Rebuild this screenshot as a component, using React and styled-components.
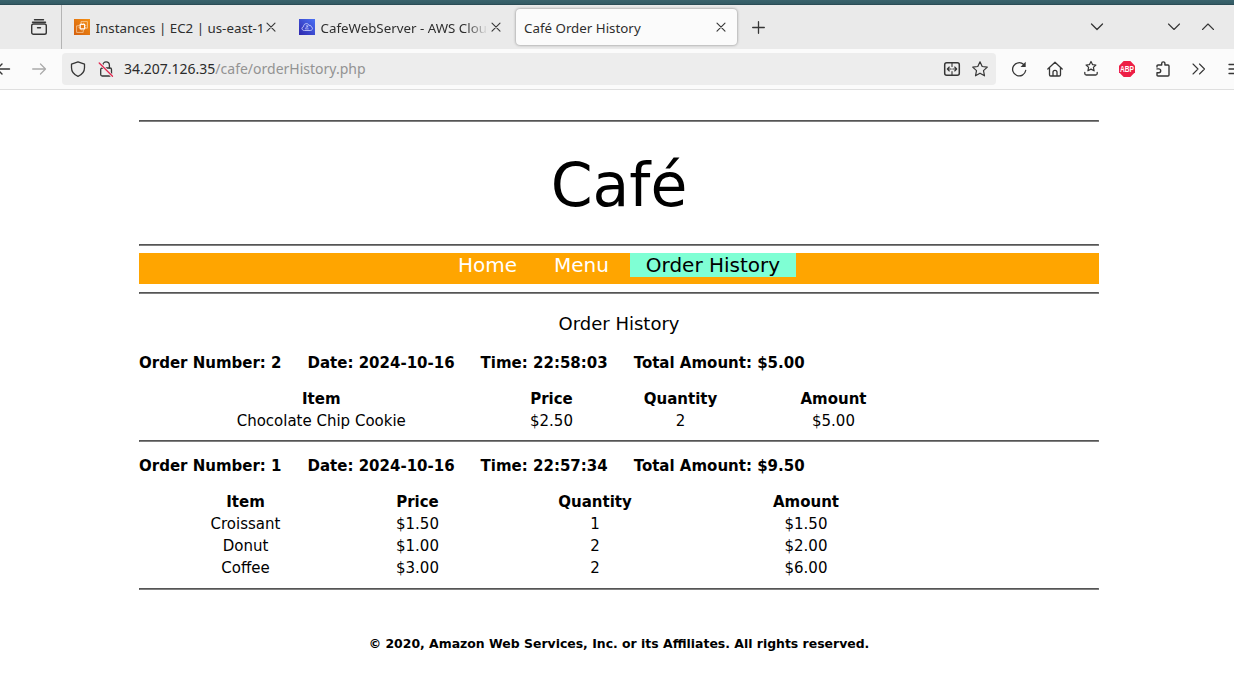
import React from "react";
import styled, { createGlobalStyle } from "styled-components";

const GlobalStyle = createGlobalStyle`
  *, *::before, *::after { box-sizing: border-box; }
  body {
    margin: 0;
    background: #fff;
    overflow: hidden;
  }
`;

const Window = styled.div`
  width: 1234px;
  height: 683px;
  overflow: hidden;
  display: flex;
  flex-direction: column;
  color: #2e2e2e;
  font-family: "Noto Sans", sans-serif;
`;

const DesktopEdge = styled.div`
  flex: none;
  height: 5px;
  background: linear-gradient(#3a636c 0, #345b65 70%, #26454e 100%);
`;

const TabStrip = styled.div`
  flex: none;
  height: 44px;
  display: flex;
  background: #eaeaea;
`;

const FirefoxView = styled.div`
  width: 62px;
  height: 44px;
  padding: 14px 0 0 31px;
  border-right: 1px solid #b4b4b4;
`;

const Tab = styled.div`
  width: ${(p) => p.$width}px;
  height: 36px;
  margin: 4px 0 0 ${(p) => p.$gap || 0}px;
  padding-left: 8px;
  display: flex;
  align-items: center;
  border-radius: 4px;
  font-size: 13.33px;
  ${(p) => p.$active && "background: #fbfbfb; box-shadow: 0 0 3px rgba(0,0,0,.45);"}
`;

const TabTitle = styled.span`
  width: ${(p) => p.$width}px;
  margin-left: ${(p) => p.$indent || 0}px;
  line-height: 20px;
  padding-top: 2px;
  white-space: nowrap;
  overflow: hidden;
  ${(p) => p.$fade && "mask-image: linear-gradient(90deg, #000 calc(100% - 22px), transparent);"}
`;

const CloseButton = styled.span`
  padding-top: 1px;
`;

const TabTools = styled.div`
  display: flex;
  padding-top: 14px;
  margin-left: ${(p) => p.$gap}px;
  gap: ${(p) => p.$spacing || 0}px;
`;

const Toolbar = styled.div`
  flex: none;
  height: 41px;
  display: flex;
  align-items: center;
  background: #fbfbfb;
  border-bottom: 1px solid #dfdfdf;
`;

const History = styled.div`
  flex: none;
  width: 62px;
  display: flex;
  gap: 20px;
  svg:first-child { margin-left: -5px; }
`;

const AddressBar = styled.div`
  flex: none;
  width: 934px;
  height: 32px;
  padding: 0 8px;
  display: flex;
  align-items: center;
  gap: 12px;
  border-radius: 4px;
  background: #ededed;
`;

const Address = styled.span`
  flex: 1;
  margin-left: -2px;
  font-size: 14px;
  line-height: 20px;
  color: #939393;
  b { font-weight: 400; color: #2b2b2b; }
`;

const Actions = styled.div`
  flex: none;
  display: flex;
  gap: 20px;
  margin-left: 15px;
`;

const Glyph = styled.svg`
  display: block;
  flex: none;
  overflow: visible;
  fill: none;
  stroke: ${(p) => p.$tone || "#363636"};
  stroke-width: ${(p) => p.$weight || 1.3};
  stroke-linecap: round;
  stroke-linejoin: round;
`;

const Icon = ({ children, size = 16, tone, weight }) => (
  <Glyph width={size} height={size} viewBox="0 0 16 16" $tone={tone} $weight={weight}>
    {children}
  </Glyph>
);

const CloseIcon = () => (
  <CloseButton>
    <Icon weight={1.1}><path d="M4 3.200l8 8M12 3.200l-8 8" /></Icon>
  </CloseButton>
);

const Page = styled.main`
  width: 960px;
  margin: 30px 0 0 139px;
  display: flex;
  flex-direction: column;
  color: #000;
  font-family: "DejaVu Sans", sans-serif;
  font-size: 15px;
`;

const Rule = styled.hr`
  width: 100%;
  height: 2px;
  margin: 0;
  border: 1px solid;
  border-color: #555 #808080 #808080 #555;
`;

const Title = styled.h1`
  height: 122px;
  margin: 0;
  padding-top: 2px;
  text-align: center;
  font-weight: 400;
  font-size: 60px;
  line-height: 122px;
`;

const Nav = styled.nav`
  height: 31px;
  margin: 7px 0 8px;
  padding-left: 303px;
  display: flex;
  align-items: flex-start;
  background: #ffa500;
  font-size: 20px;
`;

const NavLink = styled.a`
  width: ${(p) => p.$width}px;
  height: 24px;
  margin-right: 6px;
  text-align: center;
  line-height: 25px;
  color: ${(p) => (p.$current ? "#000" : "#fff")};
  background: ${(p) => (p.$current ? "#7fffd4" : "transparent")};
`;

const Heading = styled.h2`
  margin: 0;
  height: 58px;
  padding-top: 17px;
  text-align: center;
  font-weight: 400;
  font-size: 18px;
  line-height: 26px;
`;

const Summary = styled.div`
  height: 22px;
  display: flex;
  gap: 26px;
  font-weight: 700;
  line-height: 22px;
  white-space: nowrap;
`;

const Items = styled.div`
  display: grid;
  grid-template-columns: ${(p) => p.$columns};
  grid-auto-rows: 22px;
  margin: 14px 0 ${(p) => p.$after}px;
  text-align: center;
  line-height: 22px;
`;

const Head = styled.b`
  font-weight: 700;
`;

const Footer = styled.footer`
  margin-top: 44px;
  text-align: center;
  font-weight: 700;
  font-size: 12.45px;
  line-height: 20px;
`;

const ORDERS = [
  {
    number: 2, time: "22:58:03", total: "$5.00", after: 8, before: 0,
    columns: "364.5px 96px 162px 144px",
    items: [["Chocolate Chip Cookie", "$2.50", "2", "$5.00"]],
  },
  {
    number: 1, time: "22:57:34", total: "$9.50", after: 9, before: 13,
    columns: "213px 131px 224px 198px",
    items: [
      ["Croissant", "$1.50", "1", "$1.50"],
      ["Donut", "$1.00", "2", "$2.00"],
      ["Coffee", "$3.00", "2", "$6.00"],
    ],
  },
];

const OrderBlock = styled.section`
  padding-top: ${(p) => p.$before}px;
`;

const Order = ({ order }) => (
  <OrderBlock $before={order.before}>
    <Summary>
      <span>Order Number: {order.number}</span>
      <span>Date: 2024-10-16</span>
      <span>Time: {order.time}</span>
      <span>Total Amount: {order.total}</span>
    </Summary>
    <Items $columns={order.columns} $after={order.after}>
      {["Item", "Price", "Quantity", "Amount"].map((h) => <Head key={h}>{h}</Head>)}
      {order.items.flat().map((cell, i) => <span key={i}>{cell}</span>)}
    </Items>
    <Rule />
  </OrderBlock>
);

const Ec2Logo = () => (
  <Glyph width="16" height="16" viewBox="0 0 16 16" $tone="#fbd9b0" $weight={0.7}>
    <defs>
      <linearGradient id="ec2" x1="0" y1="1" x2="1" y2="0">
        <stop offset="0" stopColor="#d4600f" /><stop offset="1" stopColor="#f59012" />
      </linearGradient>
    </defs>
    <rect width="16" height="16" fill="url(#ec2)" stroke="none" />
    <path d="M4.500 6.800H2.600v6.600h6.600v-2M7 4.300V2.600h6.400v6.600h-1.900" />
    <rect x="6.200" y="5.400" width="4.400" height="4.400" stroke="#fff" strokeWidth="1.200" />
    <path d="M7.400 4.200v1M9.400 4.200v1M7.400 10v1M9.400 10v1M4.900 6.600h1M4.900 8.600h1M10.900 6.600h1M10.900 8.600h1" />
  </Glyph>
);

const CloudLogo = () => (
  <Glyph width="16" height="16" viewBox="0 0 16 16" $tone="#d5daff" $weight={0.8}>
    <defs>
      <linearGradient id="cloud" x1="0" y1="1" x2="1" y2="0">
        <stop offset="0" stopColor="#2e27ad" /><stop offset="1" stopColor="#4b72f5" />
      </linearGradient>
    </defs>
    <rect width="16" height="16" fill="url(#cloud)" stroke="none" />
    <path d="M5 11.500c-2.600 0-2.800-3.400-.4-3.800C4.400 4.200 9 3.500 10.100 6.500c1.300-.7 2.100.2 2.100 1.300 2 .5 1.600 3.700-.6 3.700z" />
    <path strokeWidth=".7" d="M6.500 9.300l2-2.300M7.300 6.800h1.400v1.400M6.700 9.900h2.600" />
  </Glyph>
);

export default function App() {
  return (
    <>
      <GlobalStyle />
      <Window>
        <DesktopEdge />
        <TabStrip>
          <FirefoxView>
            <Icon weight={1.4}>
              <path d="M3.500.8h9M1.500 3.200h13" />
              <rect x=".7" y="5" width="14.600" height="10.300" rx="1.800" />
              <path d="M6.500 8.800h3" />
            </Icon>
          </FirefoxView>
          <Tab $width={221} $gap={4}>
            <Ec2Logo />
            <TabTitle $indent={5.5} $width={167.5}>Instances | EC2 | us-east-1</TabTitle>
            <CloseIcon />
          </Tab>
          <Tab $width={221} $gap={4}>
            <CloudLogo />
            <TabTitle $indent={5.5} $width={167.5} $fade>CafeWebServer - AWS Cloud</TabTitle>
            <CloseIcon />
          </Tab>
          <Tab $width={221} $gap={4} $active>
            <TabTitle $width={189}>Café Order History</TabTitle>
            <CloseIcon />
          </Tab>
          <TabTools $gap={13}>
            <Icon weight={1.3}><path d="M2.700 8.500h11.600M8.500 2.700v11.600" /></Icon>
          </TabTools>
          <TabTools $gap={323}>
            <Icon><path d="M2.500 5L8 10.500 13.500 5" /></Icon>
          </TabTools>
          <TabTools $gap={61} $spacing={18}>
            <Icon weight={1.1}><path d="M2.500 5L8 10.500 13.500 5" /></Icon>
            <Icon weight={1.1}><path d="M2.500 10.500L8 5l5.500 5.500" /></Icon>
          </TabTools>
        </TabStrip>
        <Toolbar>
          <History>
            <Icon weight={1.4}><path d="M2 8h12.500M7 3L2 8l5 5" /></Icon>
            <Icon tone="#ababab"><path d="M1.700 8h12.600M9.500 3l5 5-5 5" /></Icon>
          </History>
          <AddressBar>
            <Icon><path d="M8 .8l6.500 2.400v3.600c0 4-2.300 6.800-6.500 8.600C3.800 13.600 1.500 10.800 1.500 6.800V3.200z" /></Icon>
            <Icon>
              <rect x="2.700" y="7" width="10.800" height="8" rx="1.500" />
              <path d="M4.800 7V4.200a3.300 3.300 0 016.600 0V7" />
              <path d="M1.500 2l12.800 13.200" stroke="#ededed" strokeWidth="2.800" />
              <path d="M1.200 2l13.300 13.200" stroke="#e22850" />
            </Icon>
            <Address><b>34.207.126.35</b>/cafe/orderHistory.php</Address>
            <Icon weight={1.5}>
              <rect x=".7" y="1.700" width="14.600" height="12.600" rx="2" />
              <path strokeWidth="1.100" d="M8 2v3.500M8 10.500V14M3.500 8h3.700M8.800 8h3.700M5.300 6L3.300 8l2 2M10.700 6l2 2-2 2" />
            </Icon>
            <Icon weight={1.2}><path d="M8 .8l2.200 4.700 5.100.6-3.800 3.500 1 5.200L8 12.200l-4.500 2.600 1-5.200L.7 6.100l5.100-.6z" /></Icon>
          </AddressBar>
          <Actions>
            <Icon>
              <path d="M14.700 9.500A6.600 6.600 0 1112.700 3.500" />
              <path d="M14.700.8v5.200H9.500z" fill="#363636" stroke="none" />
            </Icon>
            <Icon><path d="M.8 8L8 1.300 15.200 8M2.500 6.500v7.300q0 1.200 1.200 1.200h8.600q1.200 0 1.200-1.200V6.500M6 15v-3.700a2 2 0 014 0V15" /></Icon>
            <Icon>
              <path strokeWidth="1.200" d="M8 .5l1.500 3.100 3.400.4-2.500 2.400.7 3.400L8 8.100 4.900 9.800l.7-3.400L3.100 4l3.400-.4z" />
              <path d="M1.800 11.500v1q0 1.500 1.500 1.500h9.400q1.500 0 1.500-1.500v-1" />
            </Icon>
            <Icon>
              <path d="M4.700 0h6.600L16 4.700v6.600L11.300 16H4.700L0 11.300V4.700z" fill="#ed1e45" stroke="none" />
              <text x="8" y="11" textAnchor="middle" textLength="14" lengthAdjust="spacingAndGlyphs" fill="#fff" stroke="none" fontFamily="Liberation Sans" fontWeight="700" fontSize="8.600">ABP</text>
            </Icon>
            <Icon weight={1.4}><path d="M2 6V5q0-1 1-1h3.700V2.500a1.600 1.600 0 013.200 0V4H13q1 0 1 1v9q0 1-1 1H3q-1 0-1-1v-2.300h1.800a1.900 1.900 0 000-3.800H2" /></Icon>
            <Icon weight={1.1}><path d="M2 3l5 5-5 5M8.500 3l5 5-5 5" /></Icon>
            <Icon><path d="M2 3.500h13M2 8h13M2 12.500h13" /></Icon>
          </Actions>
        </Toolbar>
        <Page>
          <Rule />
          <Title>Café</Title>
          <Rule />
          <Nav>
            <NavLink $width={91}>Home</NavLink>
            <NavLink $width={85}>Menu</NavLink>
            <NavLink $width={166} $current>Order History</NavLink>
          </Nav>
          <Rule />
          <Heading>Order History</Heading>
          {ORDERS.map((o) => <Order key={o.number} order={o} />)}
          <Footer>© 2020, Amazon Web Services, Inc. or its Affiliates. All rights reserved.</Footer>
        </Page>
      </Window>
    </>
  );
}
